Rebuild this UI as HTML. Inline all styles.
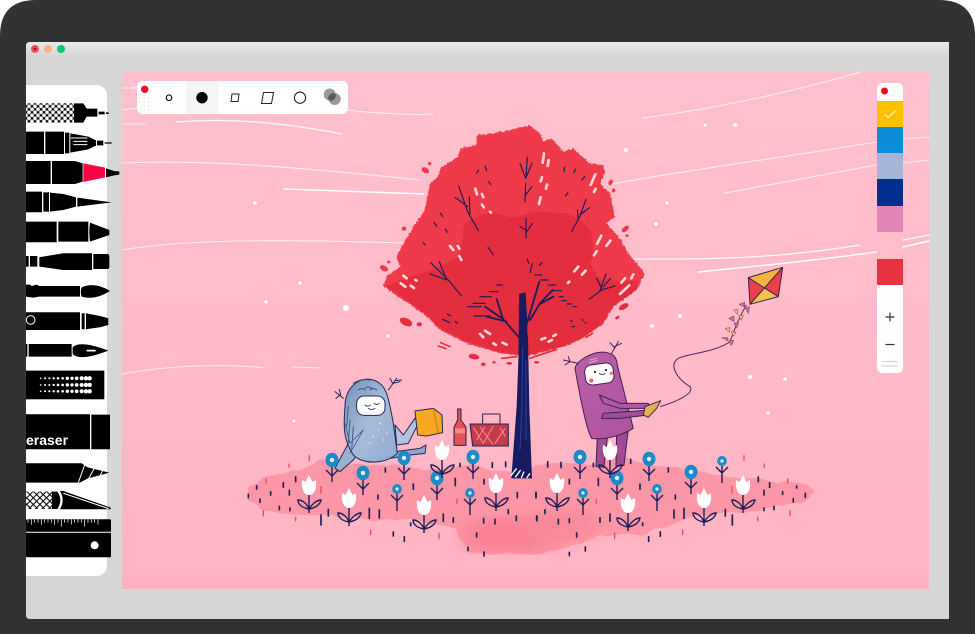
<!DOCTYPE html>
<html><head><meta charset="utf-8"><title>Drawing app</title>
<style>html,body{margin:0;padding:0;background:#fff;overflow:hidden}svg{display:block}</style></head>
<body>
<svg xmlns="http://www.w3.org/2000/svg" width="975" height="634" viewBox="0 0 975 634">
<defs>
<linearGradient id="bg" x1="0" y1="0" x2="0" y2="1"><stop offset="0" stop-color="#ffc1cf"/><stop offset=".55" stop-color="#ffbac8"/><stop offset="1" stop-color="#ffb3c2"/></linearGradient>
<linearGradient id="tb" x1="0" y1="0" x2="0" y2="1"><stop offset="0" stop-color="#e9e9e9"/><stop offset="1" stop-color="#d8d8d8"/></linearGradient>
<linearGradient id="blueb" x1="0" y1="0" x2="1" y2="1"><stop offset="0" stop-color="#6f90b6"/><stop offset=".5" stop-color="#a8bcd9"/><stop offset="1" stop-color="#8ea9cf"/></linearGradient>
<linearGradient id="pinkb" x1="0" y1="0" x2="1" y2="1"><stop offset="0" stop-color="#bb5ea6"/><stop offset="1" stop-color="#ad549f"/></linearGradient>
<pattern id="chk" width="18" height="18" patternUnits="userSpaceOnUse" patternTransform="translate(78 310)"><rect width="18" height="18" fill="#000"/><circle cx="9" cy="9" r="5.5" fill="#fff"/><circle cx="0" cy="0" r="5.5" fill="#fff"/><circle cx="18" cy="0" r="5.5" fill="#fff"/><circle cx="0" cy="18" r="5.500" fill="#fff"/><circle cx="18" cy="18" r="5.5" fill="#fff"/></pattern>
<pattern id="hatch" width="14" height="14" patternUnits="userSpaceOnUse" patternTransform="rotate(45 78 515)"><rect width="14" height="14" fill="#fff"/><path d="M0 0H14M0 0V14" stroke="#000" stroke-width="6" fill="none"/></pattern>
<filter id="rough" x="-5%" y="-5%" width="110%" height="110%"><feTurbulence type="fractalNoise" baseFrequency=".16" numOctaves="2" seed="4"/><feDisplacementMap in="SourceGraphic" scale="11" xChannelSelector="R" yChannelSelector="G"/></filter>
<filter id="soft"><feGaussianBlur stdDeviation="9"/></filter>
<filter id="g1" x="-10%" y="-10%" width="120%" height="120%"><feTurbulence type="fractalNoise" baseFrequency=".06" numOctaves="2" seed="7"/><feDisplacementMap in="SourceGraphic" scale="6" xChannelSelector="R" yChannelSelector="G"/></filter>
<filter id="all" filterUnits="userSpaceOnUse" x="-20" y="-20" width="1015" height="674"><feGaussianBlur stdDeviation=".38"/></filter>
<g id="sb"><path d="M0 0V22M0 16L-6 10M0 16L6 10" stroke="#1d1f55" stroke-width="1.4" fill="none"/><ellipse cx="0" cy="0" rx="6.5" ry="7.2" fill="#1b8ac9"/><circle cx="0" cy="0" r="2.2" fill="#dff6ff"/></g>
<g id="sm"><path d="M0 0V22M0 12L-6 6M0 12L6 6" stroke="#1d1f55" stroke-width="1.4" fill="none"/><ellipse cx="0" cy="0" rx="4.8" ry="5" fill="#1b8ac9"/><circle cx="0" cy="0" r="1.6" fill="#dff6ff"/></g>
<g id="sw"><path d="M0 4V28" stroke="#1d1f55" stroke-width="1.4"/><path d="M0 24C-6 23-11 20-11 15C-6 15-2 19 0 24C3 19 8 15 12 15C11 20 6 23 0 24Z" fill="none" stroke="#1d1f55" stroke-width="1.4"/><path d="M-7 -5L-3.500 -3L0 -10L3.500 -3L7 -5C8 4 5 10 0 10C-5 10-8 4-7 -5Z" fill="#fff"/></g>
</defs>

<g filter="url(#all)">
<rect x="-20" y="-20" width="1015" height="674" fill="#fff"/>
<path d="M-20 40V660H995V40Q995 0 940 0H35Q-20 0 -20 40Z" fill="#fff"/>
<path d="M0 36Q0 0 36 0H939Q975 0 975 36V660H995V660H-20V660H0Z" fill="#303234"/>
<path d="M26 46Q26 42 30 42H949V619H30Q26 619 26 615Z" fill="#d6d6d6"/>
<path d="M26 46Q26 42 30 42H949V55H26Z" fill="url(#tb)"/>
<circle cx="35" cy="49" r="4" fill="#f0505f"/><circle cx="35" cy="49" r="1.4" fill="#a01020"/>
<circle cx="48" cy="49" r="4" fill="#f8b47e"/>
<circle cx="61" cy="49" r="4" fill="#02c878"/>

<rect x="122" y="72" width="807" height="517" fill="url(#bg)"/>

<!-- wind lines -->
<g fill="none" stroke="#fff" stroke-linecap="round">
<g stroke-opacity=".7" stroke-width="1.1">
<path d="M122 88H137M122 110L137 108M122 124H145M348 110C380 114 420 115 432 114"/>
<path d="M122 163C200 160 280 165 420 180"/>
<path d="M122 250C190 238 300 240 402 243"/>
<path d="M643 118C720 108 800 90 860 72"/>
<path d="M612 184C700 168 800 155 876 142M903 139L929 137"/>
<path d="M725 193L876 165M903 163L929 160"/>
<path d="M122 374C180 363 240 365 265 368M292 367L320 368"/>
</g>
<path d="M176 122C230 118 280 122 342 134" stroke-opacity=".85" stroke-width="1.3"/>
<path d="M284 189L424 194" stroke-width="1.5"/>
<path d="M633 259H660C720 259 780 258 860 245M903 240L929 235" stroke-opacity=".9" stroke-width="1.3"/>
<path d="M698 272C760 266 820 260 876 252M903 247L929 241" stroke-width="1.5"/>
</g>
<g fill="#fff">
<circle cx="255" cy="203" r="1.8"/><circle cx="300" cy="283" r="1.8"/><circle cx="266" cy="302" r="1.8"/><circle cx="346" cy="308" r="3"/><circle cx="388" cy="336" r="1.5"/><circle cx="294" cy="421" r="1.3"/>
<circle cx="626" cy="150" r="2"/><circle cx="656" cy="224" r="2"/><circle cx="652" cy="326" r="2"/><circle cx="680" cy="316" r="1.8"/><circle cx="750" cy="377" r="2"/><circle cx="785" cy="379" r="1.8"/><circle cx="768" cy="413" r="1.5"/><circle cx="705" cy="125" r="1.5"/><circle cx="735" cy="125" r="2"/><circle cx="667" cy="203" r="1.6"/>
</g>

<!-- ground -->
<path filter="url(#g1)" d="M248 488L262 478L300 470L320 460L345 465L395 465L430 470L470 465L510 472L555 462L590 465L620 455L650 465L690 470L720 475L760 480L800 483L815 490L805 502L760 510L700 515L670 525L640 535L600 535L580 545L530 555L470 552L455 530L420 520L370 520L330 515L300 515L265 510L248 500Z" fill="#fd97a7"/>
<ellipse cx="510" cy="535" rx="50" ry="16" fill="#f97f90" filter="url(#soft)"/>
<ellipse cx="560" cy="525" rx="40" ry="14" fill="#fa8898" filter="url(#soft)"/>

<!-- tree crown -->
<g transform="translate(370 110) scale(.3333)">
<path filter="url(#rough)" fill="#ef3b48" d="M480 47L510 70L520 95L545 85L580 125L610 115L660 160L700 165L705 185L690 220L720 250L735 320L710 340L750 385L775 430L825 490L800 540L730 590L700 640L630 690L560 715L470 740L390 730L290 700L210 660L170 620L130 590L40 530L50 500L90 470L80 440L100 400L130 350L165 300L180 220L205 200L210 175L265 140L270 115L320 105L320 75L370 70L440 55Z"/>
<path fill="#e52e3e" d="M280 350Q300 320 370 305Q410 325 450 320Q490 300 520 305Q590 310 610 315Q660 350 665 370L670 420L660 460L690 510L800 515L800 540L730 590L700 640L630 690L560 715L470 735L390 725L290 695L210 655L170 615L130 585L48 530L120 500L210 470L270 440Z" filter="url(#rough)"/>
<g fill="#ef3b48"><ellipse cx="166" cy="181" rx="12" ry="8" transform="rotate(30 166 181)"/><ellipse cx="179" cy="161" rx="5" ry="5"/><ellipse cx="722" cy="217" rx="6" ry="9" transform="rotate(25 722 217)"/><ellipse cx="731" cy="241" rx="5" ry="6"/><ellipse cx="766" cy="357" rx="13" ry="7" transform="rotate(-40 766 357)"/><ellipse cx="771" cy="377" rx="5" ry="4"/><ellipse cx="102" cy="356" rx="7" ry="6"/><ellipse cx="42" cy="475" rx="13" ry="8" transform="rotate(30 42 475)"/><ellipse cx="56" cy="456" rx="5" ry="4"/></g>
<g fill="#e52e3e"><ellipse cx="108" cy="636" rx="20" ry="11" transform="rotate(25 108 636)"/><ellipse cx="148" cy="643" rx="8" ry="6"/><ellipse cx="312" cy="740" rx="16" ry="8" transform="rotate(10 312 740)"/><ellipse cx="340" cy="763" rx="7" ry="5"/><ellipse cx="761" cy="590" rx="16" ry="8" transform="rotate(-30 761 590)"/><ellipse cx="742" cy="623" rx="7" ry="4" transform="rotate(-30 742 623)"/><ellipse cx="372" cy="757" rx="5" ry="4"/><ellipse cx="418" cy="760" rx="9" ry="4"/><ellipse cx="500" cy="757" rx="8" ry="4"/></g>
<g fill="none" stroke="#e52e3e" stroke-width="5" stroke-linecap="round"><path d="M205 708L228 716M212 698L240 710M395 745L440 740M480 745L560 718M470 732L590 705M648 682L668 670"/></g>
<!-- white dashes -->
<g stroke="#ffd5d9" stroke-width="8" stroke-linecap="round" fill="none">
<path d="M522 130L518 158M536 150L533 168M516 202L512 214M531 224L528 236M512 262L507 282M676 193L662 225M677 236L672 246M316 236L321 253M336 252L340 262M336 284L341 292M694 377L681 402M721 392L709 408M680 424L672 436M625 470L613 484M647 482L636 494M240 408L250 420M263 408L268 416M268 438L274 450M100 497L110 505M92 520L106 530M122 527L132 534M136 510L140 512M790 493L784 505M765 505L754 518M778 526L750 552M598 515L594 519M330 672L340 682M345 662L360 672M370 700L378 705M398 698L410 704M514 688L526 684M536 695L546 690M550 678L558 674M360 305L363 308"/>
</g>
<!-- branches -->
<g fill="none" stroke="#1a1d5c" stroke-linecap="round" stroke-linejoin="round">
<g stroke-width="3.500">
<path d="M465 275L467 220M467 205L450 160M468 195L472 142M467 205L486 160M467 255L485 230"/>
<path d="M325 362L293 305L266 228M293 290L255 262M300 312L298 260"/>
<path d="M605 365L630 318L648 268M625 325L622 300M634 312L658 293"/>
<path d="M468 385L468 325M467 360L450 350M468 368L488 340"/>
<path d="M275 558L235 510L182 458M230 510L180 492M228 505L208 455"/>
<path d="M657 568L695 540L735 528M690 542L708 492M695 535L680 505M700 530L722 505"/>
<path d="M326 180L320 190M345 168L350 182M356 215L362 224M584 172L582 186M616 178L612 188M645 200L635 210M594 248L586 258M212 310L218 320M192 338L200 348M226 357L232 367M160 398L165 405M355 413L370 434M472 448L476 460M487 460L480 488M516 458L508 466"/>
<path d="M495 495H515M512 510H535M535 525H558M550 542H575M568 560H580M575 572H590M592 582H605M610 590H620M602 632L607 634M636 628L640 632M606 650H614M645 638L648 640M218 628L240 638M232 612L242 618M256 634L262 640M380 525H398M358 545H384M330 560H365M310 580H345M292 590H335M312 618H360"/>
</g>
<path d="M445 680L400 628L345 590M400 630L380 568M410 635L350 620M465 660L508 515M480 630L510 580L548 540M510 582L550 560" stroke-width="5.500"/>
</g>
<path d="M447 552L467 547L472 640L472 790H445L446 680Z" fill="#161c5e"/>
</g>

<!-- illustration lower -->
<g transform="translate(320 340) scale(.3333)">
<path d="M598 -15H624L628 200L636 415H574L590 200Z" fill="#161c5e"/>
<path d="M608 20L606 200L600 330M618 60L618 300" stroke="#2f3fa0" stroke-width="3" fill="none"/>
<path d="M572 408L590 385M586 412L602 390M604 414L612 395M620 414L630 400" stroke="#fff" stroke-width="4"/>

<g stroke="#22265c" stroke-width="3" stroke-linejoin="round" stroke-linecap="round">
<path d="M110 345L85 310L45 385L60 395L100 360Z" fill="#9bb0cf"/>
<path d="M225 255L250 285L285 235L295 250L265 310L230 315Z" fill="#b3c3dd"/>
<path d="M150 365L270 345L315 340L318 315L300 325L225 335L150 345Z" fill="#90a8c8"/>
<path d="M75 200C75 140 120 108 160 120C200 132 205 170 220 250L232 340C200 372 130 376 100 345C70 300 70 260 75 200Z" fill="url(#blueb)"/>
<rect x="110" y="168" width="85" height="58" rx="22" fill="#fff"/>
<path d="M135 195q9 7 16 0M162 190q9 7 16 0M145 205q10 8 20 0" fill="none" stroke-width="2.500"/>
<path d="M100 130q20 -15 50 -10M115 150q10 -8 20 0M135 145q10 -8 20 0M150 150q10 -8 20 0" fill="none" stroke="#3a4c86" stroke-width="3"/>
<path d="M70 175L45 155M60 165L48 175M62 165L58 148M205 150L230 115M225 122L245 120M218 130L240 125M218 130L210 115" fill="none"/>
<path d="M75 250L90 310L130 270L90 340" fill="none" stroke="#2e4474" stroke-width="2"/>
<path d="M90 240L85 310M100 260L95 330M85 200L80 260" stroke="#3e5c90" stroke-width="3" fill="none"/>
</g>
<g fill="#fff"><circle cx="175" cy="270" r="2"/><circle cx="160" cy="290" r="2"/><circle cx="190" cy="300" r="2"/><circle cx="180" cy="250" r="2"/><circle cx="200" cy="280" r="2"/><circle cx="150" cy="310" r="2"/></g>
<path d="M285 213L340 205L366 225L368 278L320 288L293 285Z" fill="#f9a623" stroke="#2a2a4e" stroke-width="3" stroke-linejoin="round"/>
<path d="M340 205L355 280" stroke="#c47814" stroke-width="3"/>
<path d="M413 207H423V240L438 262V316H402V262L413 240Z" fill="#e5515a" stroke="#2a2050" stroke-width="3"/>
<rect x="405" y="265" width="30" height="15" fill="#f68a85"/>
<path d="M488 250V222H540V250" fill="none" stroke="#2a2050" stroke-width="3"/>
<path d="M450 252H565V318H458Z" fill="#c53a4a" stroke="#2a2050" stroke-width="3"/>
<path d="M460 262L490 310M480 260L520 315M520 258L490 310M555 265L525 310M540 262L556 290M470 300L495 260" stroke="#f58f93" stroke-width="3" fill="none"/>
<g stroke="#3b2058" stroke-width="3" stroke-linejoin="round" stroke-linecap="round">
<path d="M832 290L828 380L852 382L862 295Z" fill="#a24b95"/>
<path d="M890 280L888 378L912 376L925 270Z" fill="#a24b95"/>
<path d="M765 85C770 60 830 25 868 40C885 45 890 55 893 80L940 265C900 290 850 300 815 295C800 270 780 170 765 85Z" fill="url(#pinkb)"/>
<rect x="795" y="72" width="86" height="60" rx="20" fill="#fff" transform="rotate(-8 838 102)"/>
<path d="M838 100q8 7 18 0" fill="none" stroke-width="2.500"/>
<circle cx="825" cy="96" r="2" fill="#222"/><circle cx="858" cy="90" r="2" fill="#222"/>
<path d="M775 70L730 60M750 65L735 75M750 65L745 50M875 40L895 5M883 20L905 10M883 22L870 8" fill="none"/>
<path d="M810 60L830 55M808 68L830 62" stroke="#e0a8d0" stroke-width="3" fill="none"/>
<path d="M838 165L900 190L985 190L990 205L900 205L850 190Z" fill="#b05aa3"/>
<path d="M850 220L920 215L985 210L985 225L900 235L845 235Z" fill="#a04f96"/>
<path d="M975 200L1022 182L1010 205L985 232L970 225Z" fill="#e3b14f"/>
</g>
<circle cx="814" cy="122" r="6" fill="#f05a5a"/><circle cx="874" cy="100" r="5" fill="#f07a80"/>
</g>

<!-- kite -->
<g transform="translate(640 255) scale(.3333)">
<path d="M270 260C230 290 150 295 115 310C85 330 110 370 150 395C165 415 110 440 60 455M320 150C300 180 285 220 270 260" fill="none" stroke="#4b2a68" stroke-width="3"/>
<path d="M325 68L372 100L330 148Z" fill="#e8404b"/>
<path d="M325 68L428 37L372 100Z" fill="#f5b43e"/>
<path d="M428 37L415 125L372 100Z" fill="#e8404b"/>
<path d="M415 125L330 148L372 100Z" fill="#f8c150"/>
<path d="M325 68L428 37L415 125L330 148ZM325 68L415 125M428 37L330 148" fill="none" stroke="#33204f" stroke-width="3" stroke-linejoin="round"/>
<g fill="#d86a8a" stroke="#7a2d4e" stroke-width="1.500"><path d="M297 148L314 142L314 156Z"/><path d="M316 160L328 154L326 176Z"/><path d="M266 190L282 183L282 200Z"/><path d="M282 204L296 204L290 220Z"/><path d="M245 248L264 248L264 258Z"/><path d="M266 258L282 256L274 272Z"/></g>
<g fill="#efc27f" stroke="#7a2d4e" stroke-width="1.500"><path d="M281 165L294 164L292 178Z"/><path d="M296 182L310 180L304 196Z"/><path d="M255 220L270 218L268 232Z"/><path d="M274 230L288 232L280 244Z"/></g>
</g>

<!-- flowers -->
<use href="#sb" x="332" y="460"/><use href="#sb" x="363" y="473"/><use href="#sm" x="397" y="489"/><use href="#sb" x="404" y="458"/><use href="#sb" x="437" y="478"/><use href="#sm" x="470" y="493"/><use href="#sb" x="473" y="457"/>
<use href="#sb" x="580" y="457"/><use href="#sb" x="649" y="459"/><use href="#sb" x="691" y="472"/><use href="#sm" x="722" y="461"/><use href="#sb" x="617" y="478"/><use href="#sm" x="583" y="493"/><use href="#sm" x="657" y="489"/>
<use href="#sw" x="309" y="485"/><use href="#sw" x="349" y="498"/><use href="#sw" x="424" y="505"/><use href="#sw" x="442" y="450"/><use href="#sw" x="496" y="483"/><use href="#sw" x="557" y="483"/><use href="#sw" x="610" y="450"/><use href="#sw" x="628" y="503"/><use href="#sw" x="704" y="498"/><use href="#sw" x="743" y="485"/>

<!-- ground marks -->
<g transform="translate(240 440) scale(.3333)" fill="none" stroke-linecap="round" stroke-width="5">
<path stroke="#1f2050" d="M25 163v10M50 137v10M60 177v10M92 155v10M130 128v14M148 151v14M118 199v10M150 204v8M167 111v14M243 225v30M265 208v20M388 205v30M418 210v24M414 165v12M436 84v12M520 132v16M512 249v8M460 276v12M493 290v14M610 222v22M640 233v14M646 115v22M660 70v10M732 118v14M757 68v14M797 66v14M832 157v16M888 157v16M805 209v12M829 228v14M891 228v14M731 235v14M765 238v14M710 279v12M684 322v10M732 336v12"/>
<path stroke="#ef4b55" stroke-width="4" d="M208 47v14M147 72v10M78 117v12M243 140v20M70 212v16M167 232v10M392 270v14M597 280v16M651 178v12"/>
</g>
<g transform="translate(530 440) scale(.3333)" fill="none" stroke-linecap="round" stroke-width="5">
<path stroke="#1f2050" d="M53 65v16M93 67v16M18 157v16M118 118v14M45 209v12M20 228v14M85 238v14M118 236v12M140 279v12M166 321v12M118 337v10M190 70v10M205 115v22M210 233v14M240 222v22M302 58v12M330 132v16M338 249v8M356 290v14M391 275v14M415 84v12M436 165v12M432 210v24M462 205v30M586 208v20M607 225v30M685 111v14M719 128v14M702 151v14M758 155v8M800 138v6M826 160v12M790 176v10M702 204v8M732 199v10"/>
<path stroke="#ef4b55" stroke-width="4" d="M642 47v14M703 72v10M606 140v20M773 117v12M780 212v16M683 232v10M458 270v14M254 280v16M199 178v12"/>
</g>

<!-- left tools panel -->
<path d="M26 85H95Q107 85 107 97V564Q107 576 95 576H26Z" fill="#fff"/>
<g transform="scale(.3333)">
<rect x="78" y="310" width="144" height="58" fill="url(#chk)"/>
<path d="M222 310H250L260 326H292V350H260L250 368H222ZM296 335H314V343H296ZM318 337H326V342H318Z" fill="#000"/>
<path d="M78 395H132V462H78ZM136 395H192V462H136ZM195 398H208V460H195ZM211 400L265 410L285 420H288V438H285L265 448L211 458ZM291 422H310V436H291ZM314 427H335V431H314Z" fill="#000"/>
<path d="M212 414H262M220 424H262M220 434H262" stroke="#fff" stroke-width="3" fill="none"/>
<path d="M78 483H152V552H78ZM156 483H225L248 490V545L225 552H156ZM318 505L342 513L358 514V524L342 526L318 532Z" fill="#000"/>
<path d="M250 490L315 503V532L250 546Z" fill="#ff0044"/>
<path d="M78 575H126V637H78ZM130 577H147V635H130ZM150 578L190 582L228 592V620L190 630L150 635ZM232 593L335 607L232 620Z" fill="#000"/>
<path d="M78 665H170V727H78ZM175 665H265V725H175ZM270 668L328 690V705L270 725Q266 695 270 668Z" fill="#000"/>
<path d="M78 768H86V800H78ZM90 768H112V800H90ZM118 772L190 760H276V810H190L118 800ZM280 762H322Q328 762 328 770V800Q328 807 322 807H280Z" fill="#000"/>
<path d="M78 854H90L95 858L110 854L118 858H240V890H118L100 893L78 890ZM245 862Q285 845 330 873Q285 902 245 890Q240 876 245 862Z" fill="#000"/>
<path d="M78 937H240V990H78ZM245 940H254V988H245ZM258 940L300 948L325 955V975L300 982L258 988Z" fill="#000"/>
<circle cx="92" cy="960" r="13" fill="none" stroke="#fff" stroke-width="3"/>
<path d="M78 1032H82V1070H78ZM86 1032H215V1070H86ZM218 1042Q240 1020 325 1052Q240 1085 218 1062Z" fill="#000"/>
<path d="M262 1052H285" stroke="#fff" stroke-width="5" stroke-linecap="round"/>
<rect x="78" y="1112" width="235" height="86" fill="#000"/>
<g fill="#fff"><circle cx="122" cy="1135" r="2.500"/><circle cx="135" cy="1135" r="3"/><circle cx="148" cy="1135" r="3"/><circle cx="161" cy="1135" r="3.500"/><circle cx="174" cy="1135" r="4"/><circle cx="188" cy="1135" r="4"/><circle cx="202" cy="1135" r="5"/><circle cx="216" cy="1135" r="5"/><circle cx="230" cy="1135" r="5.500"/><circle cx="245" cy="1135" r="6"/><circle cx="258" cy="1135" r="6.500"/><circle cx="269" cy="1135" r="6.500"/>
<circle cx="122" cy="1155" r="2.500"/><circle cx="135" cy="1155" r="3"/><circle cx="148" cy="1155" r="3"/><circle cx="161" cy="1155" r="3.500"/><circle cx="174" cy="1155" r="4"/><circle cx="188" cy="1155" r="4"/><circle cx="202" cy="1155" r="5"/><circle cx="216" cy="1155" r="5"/><circle cx="230" cy="1155" r="5.500"/><circle cx="245" cy="1155" r="6"/><circle cx="258" cy="1155" r="6.500"/><circle cx="269" cy="1155" r="6.500"/>
<circle cx="122" cy="1174" r="2.500"/><circle cx="135" cy="1174" r="3"/><circle cx="148" cy="1174" r="3"/><circle cx="161" cy="1174" r="3.500"/><circle cx="174" cy="1174" r="4"/><circle cx="188" cy="1174" r="4"/><circle cx="202" cy="1174" r="5"/><circle cx="216" cy="1174" r="5"/><circle cx="230" cy="1174" r="5.500"/><circle cx="245" cy="1174" r="6"/><circle cx="258" cy="1174" r="6.500"/><circle cx="269" cy="1174" r="6.500"/></g>
<path d="M78 1243H270V1348H78ZM274 1244H330V1348H274Z" fill="#000"/>
<path d="M78 1390H245L262 1402L328 1418L262 1436L240 1448H78Z" fill="#000"/>
<path d="M255 1392L235 1448M283 1405L265 1438M310 1408L300 1428" stroke="#fff" stroke-width="3" fill="none"/>
<rect x="78" y="1475" width="78" height="52" fill="url(#hatch)"/>
<path d="M156 1475H172Q190 1500 172 1527H156ZM180 1473H190L332 1523V1528H180Q196 1500 180 1473Z" fill="#000"/>
<path d="M190 1480L326 1526" stroke="#fff" stroke-width="3" fill="none"/>
<rect x="78" y="1558" width="255" height="114" rx="4" fill="#000"/>
<path d="M78 1597H333" stroke="#fff" stroke-width="3"/>
<path d="M84 1558v10M94 1558v16M104 1558v10M114 1558v10M124 1558v16M134 1558v10M144 1558v10M154 1558v10M164 1558v16M174 1558v10M184 1558v22M194 1558v10M204 1558v10M214 1558v16M224 1558v10M234 1558v10M244 1558v10M254 1558v22M264 1558v10M274 1558v10M284 1558v10M294 1558v16" stroke="#fff" stroke-width="2.200"/>
<circle cx="284" cy="1636" r="12" fill="#fff"/>
</g>
<svg x="26" y="400" width="80" height="60" viewBox="26 400 80 60"><text x="26" y="445" font-family="'Liberation Sans',sans-serif" font-weight="700" font-size="14" fill="#fff">eraser</text></svg>

<!-- top toolbar -->
<rect x="137" y="81" width="211" height="33" rx="6" fill="#fff"/>
<rect x="186" y="81" width="32" height="33" fill="#f5f5f5"/>
<circle cx="144.700" cy="89.300" r="3.700" fill="#f10a1a"/>
<g fill="#d8d8d8"><circle cx="141" cy="98" r=".6"/><circle cx="144" cy="98" r=".6"/><circle cx="148" cy="98" r=".6"/><circle cx="141" cy="102" r=".6"/><circle cx="144" cy="102" r=".6"/><circle cx="148" cy="102" r=".6"/><circle cx="141" cy="106" r=".6"/><circle cx="144" cy="106" r=".6"/><circle cx="148" cy="106" r=".6"/><circle cx="141" cy="110" r=".6"/><circle cx="144" cy="110" r=".6"/><circle cx="148" cy="110" r=".6"/></g>
<circle cx="169" cy="97.700" r="2.800" fill="#fff" stroke="#111" stroke-width="1.100"/>
<circle cx="202" cy="97.700" r="5.700" fill="#000"/>
<path d="M232 94H239L238 101.500H231Z" fill="#fff" stroke="#222" stroke-width="1"/>
<path d="M263.500 92.500H273.500L271.500 103.500H261.500Z" fill="#fff" stroke="#222" stroke-width="1"/>
<circle cx="300" cy="97.700" r="5.600" fill="#fff" stroke="#222" stroke-width="1.100"/>
<circle cx="329.700" cy="94.500" r="6" fill="#999"/>
<circle cx="334.700" cy="99" r="6" fill="#999"/>
<ellipse cx="332" cy="97" rx="3.200" ry="4.500" transform="rotate(45 332 97)" fill="#5a5a5a"/>

<!-- right palette -->
<path d="M877 101V89Q877 83 883 83H897Q903 83 903 89V101Z" fill="#fff"/>
<circle cx="884.500" cy="91" r="3.500" fill="#f10a1a"/>
<g fill="#d8d8d8"><circle cx="891" cy="87" r=".6"/><circle cx="894" cy="87" r=".6"/><circle cx="898" cy="87" r=".6"/><circle cx="891" cy="91" r=".6"/><circle cx="894" cy="91" r=".6"/><circle cx="898" cy="91" r=".6"/><circle cx="891" cy="95" r=".6"/><circle cx="894" cy="95" r=".6"/><circle cx="898" cy="95" r=".6"/></g>
<rect x="877" y="101" width="26" height="26" fill="#ffc000"/>
<path d="M884.500 114.500L888 117.500L895.500 111" fill="none" stroke="#fff4c8" stroke-width="1.200"/>
<rect x="877" y="127" width="26" height="26" fill="#0b8dd8"/>
<rect x="877" y="153" width="26" height="26" fill="#a4b5d8"/>
<rect x="877" y="179" width="26" height="27" fill="#062d91"/>
<rect x="877" y="206" width="26" height="26" fill="#e285b8"/>
<rect x="877" y="259" width="26" height="26" fill="#e8303f"/>
<path d="M877 285H903V367Q903 373 897 373H883Q877 373 877 367Z" fill="#fff"/>
<path d="M885.500 317H894.500M890 312.500V321.500" stroke="#333" stroke-width="1.200"/>
<path d="M885.500 344.500H894.500" stroke="#333" stroke-width="1.200"/>
<path d="M882 361.500H898M882 366H898" stroke="#d4d4d4" stroke-width="1.200"/>
</g>
</svg>
</body></html>
